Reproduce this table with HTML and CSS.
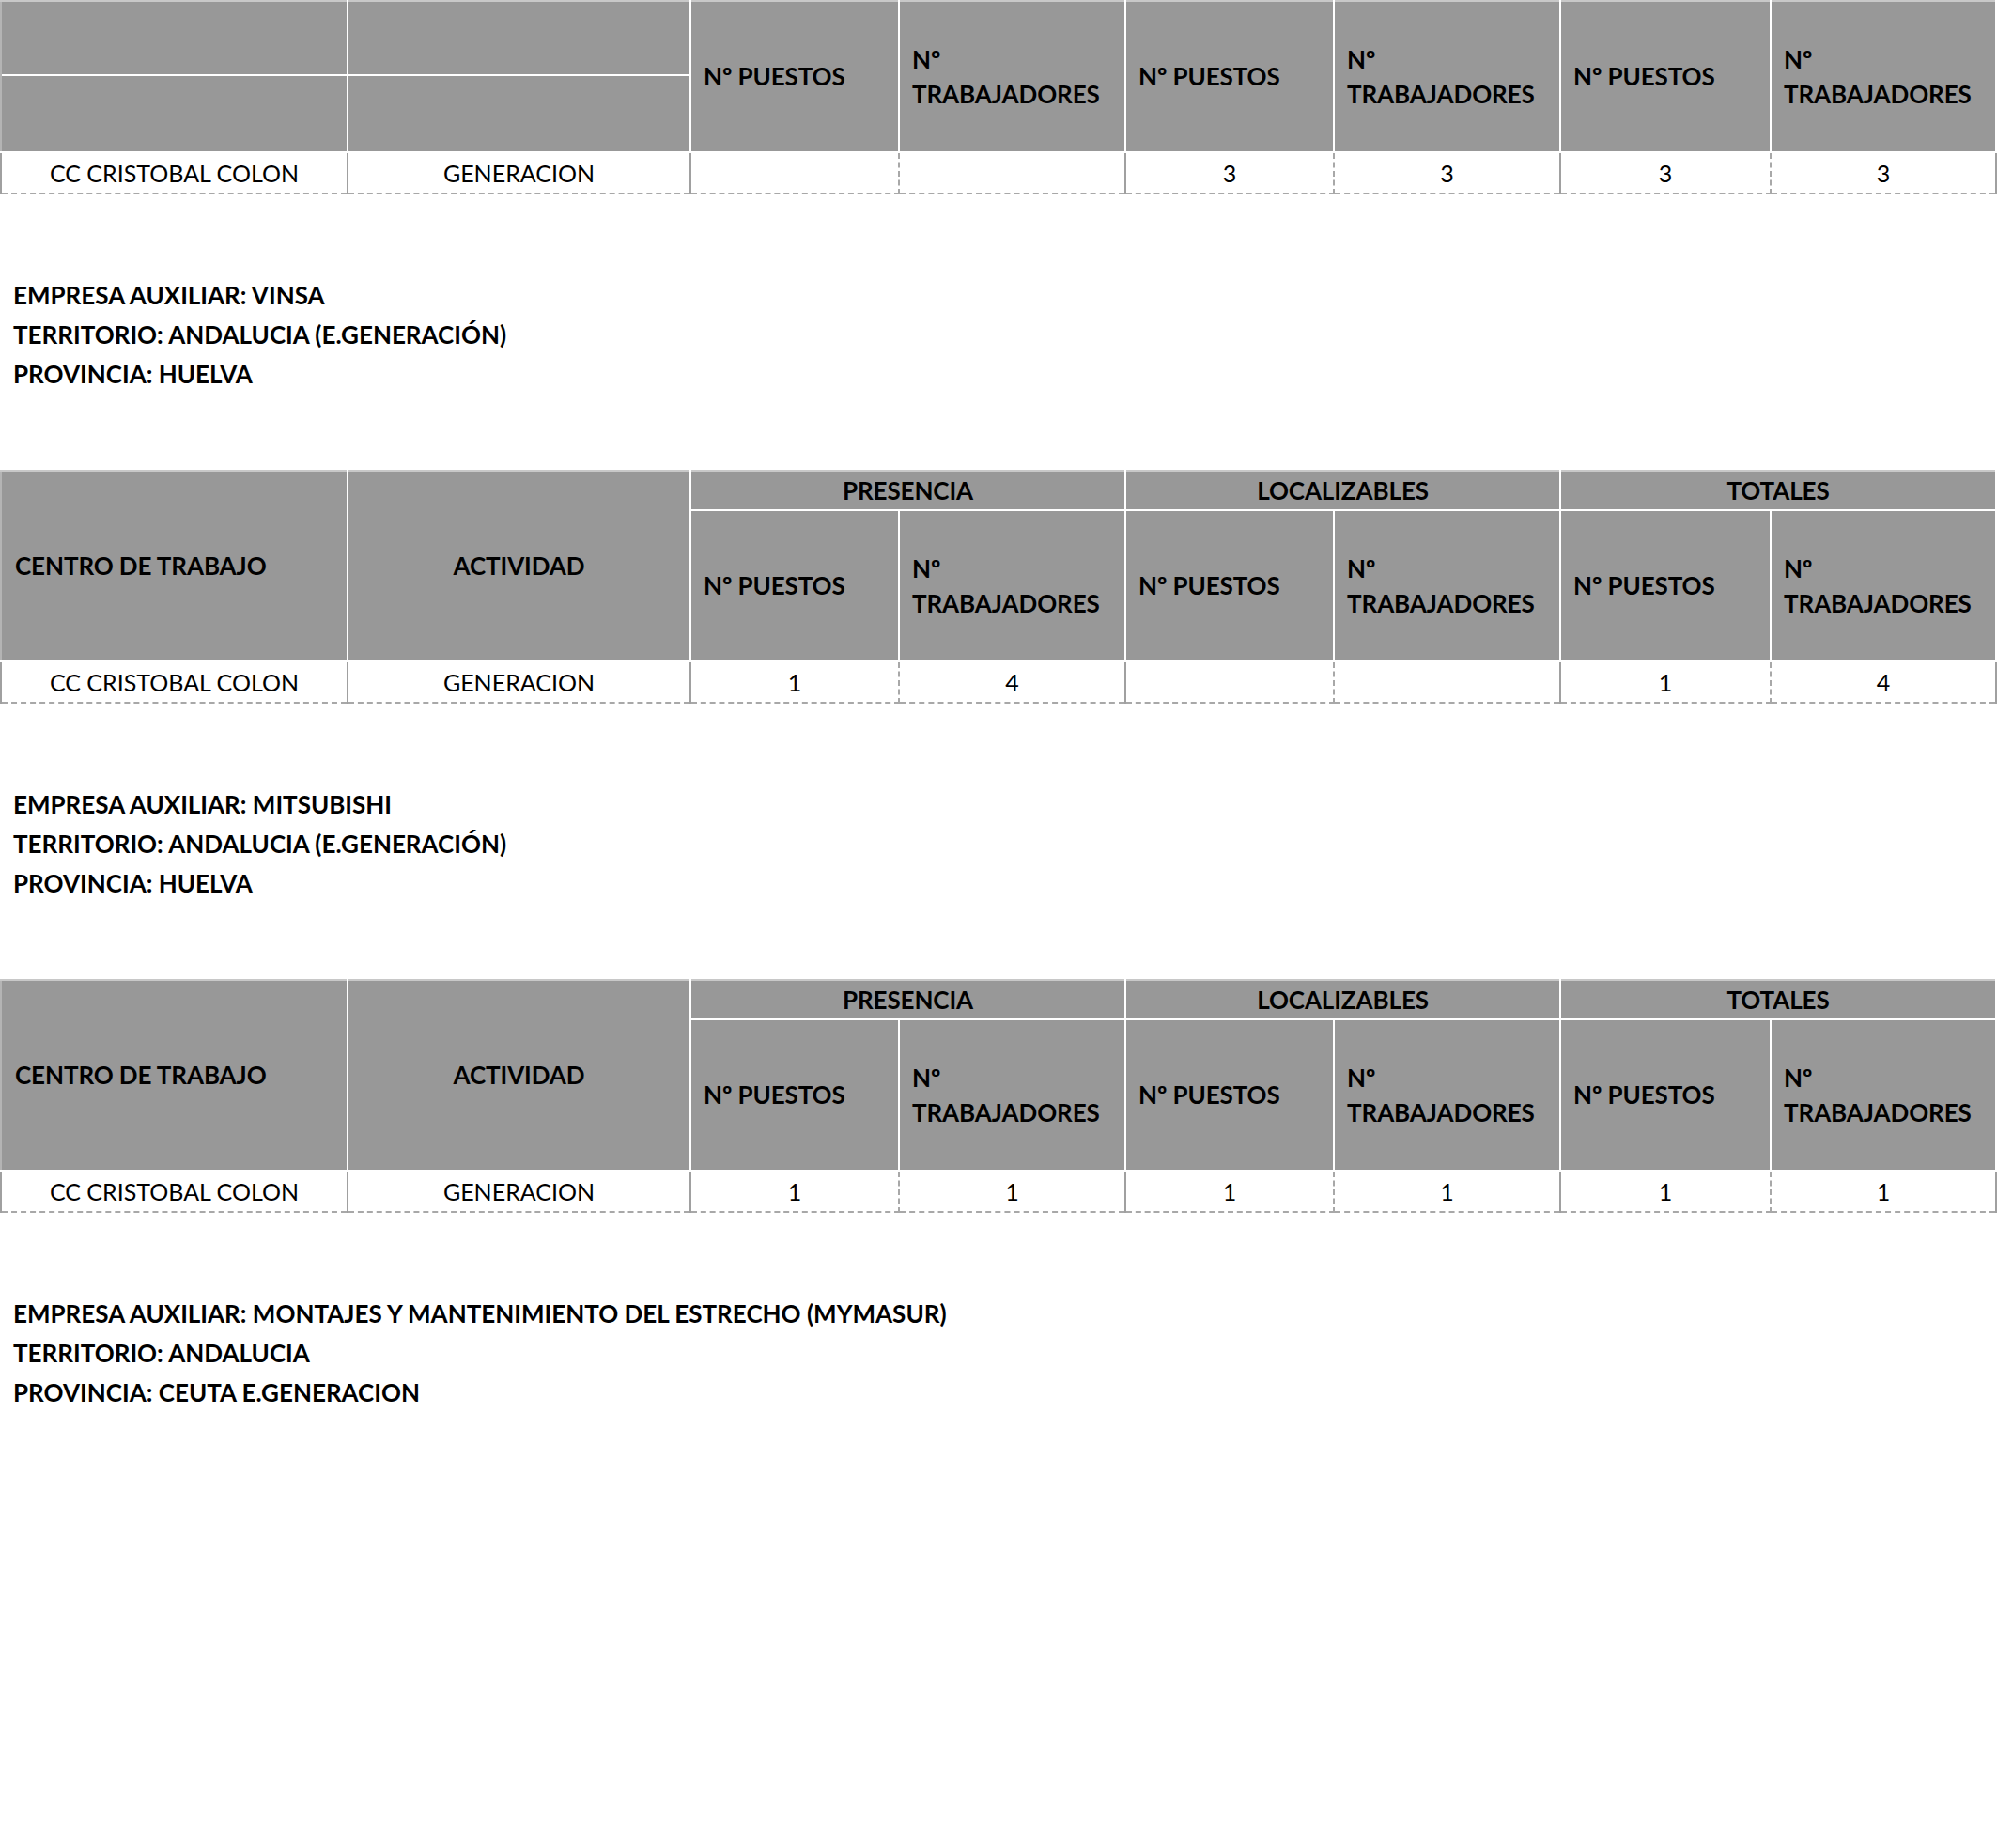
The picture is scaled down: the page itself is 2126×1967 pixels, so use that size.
FILE: index.html
```html
<!DOCTYPE html>
<html lang="es">
<head>
<meta charset="utf-8">
<title>Empresas auxiliares</title>
<link rel="stylesheet" href="styles.css">
</head>
<body>
<div class="page">

<table class="grid first">
  <colgroup>
    <col class="c1"><col class="c2"><col class="c3"><col class="c4"><col class="c5"><col class="c6"><col class="c7"><col class="c8">
  </colgroup>
  <thead>
    <tr class="h-split-a">
      <th class="blank split"></th>
      <th class="blank split"></th>
      <th rowspan="2" class="sub">Nº PUESTOS</th>
      <th rowspan="2" class="sub">Nº<br>TRABAJADORES</th>
      <th rowspan="2" class="sub">Nº PUESTOS</th>
      <th rowspan="2" class="sub">Nº<br>TRABAJADORES</th>
      <th rowspan="2" class="sub">Nº PUESTOS</th>
      <th rowspan="2" class="sub">Nº<br>TRABAJADORES</th>
    </tr>
    <tr class="h-split-b">
      <th class="blank"></th>
      <th class="blank"></th>
    </tr>
  </thead>
  <tbody>
    <tr class="data">
      <td class="solid">CC CRISTOBAL COLON</td>
      <td class="solid">GENERACION</td>
      <td class="dash"></td>
      <td class="solid"></td>
      <td class="dash">3</td>
      <td class="solid">3</td>
      <td class="dash">3</td>
      <td class="solid">3</td>
    </tr>
  </tbody>
</table>

<div class="info">
  <p>EMPRESA AUXILIAR: VINSA</p>
  <p>TERRITORIO: ANDALUCIA (E.GENERACIÓN)</p>
  <p>PROVINCIA: HUELVA</p>
</div>

<table class="grid">
  <colgroup>
    <col class="c1"><col class="c2"><col class="c3"><col class="c4"><col class="c5"><col class="c6"><col class="c7"><col class="c8">
  </colgroup>
  <thead>
    <tr class="h-group">
      <th rowspan="2" class="left">CENTRO DE TRABAJO</th>
      <th rowspan="2" class="center">ACTIVIDAD</th>
      <th colspan="2" class="center">PRESENCIA</th>
      <th colspan="2" class="center">LOCALIZABLES</th>
      <th colspan="2" class="center">TOTALES</th>
    </tr>
    <tr class="h-sub">
      <th class="sub">Nº PUESTOS</th>
      <th class="sub">Nº<br>TRABAJADORES</th>
      <th class="sub">Nº PUESTOS</th>
      <th class="sub">Nº<br>TRABAJADORES</th>
      <th class="sub">Nº PUESTOS</th>
      <th class="sub">Nº<br>TRABAJADORES</th>
    </tr>
  </thead>
  <tbody>
    <tr class="data">
      <td class="solid">CC CRISTOBAL COLON</td>
      <td class="solid">GENERACION</td>
      <td class="dash">1</td>
      <td class="solid">4</td>
      <td class="dash"></td>
      <td class="solid"></td>
      <td class="dash">1</td>
      <td class="solid">4</td>
    </tr>
  </tbody>
</table>

<div class="info">
  <p>EMPRESA AUXILIAR: MITSUBISHI</p>
  <p>TERRITORIO: ANDALUCIA (E.GENERACIÓN)</p>
  <p>PROVINCIA: HUELVA</p>
</div>

<table class="grid">
  <colgroup>
    <col class="c1"><col class="c2"><col class="c3"><col class="c4"><col class="c5"><col class="c6"><col class="c7"><col class="c8">
  </colgroup>
  <thead>
    <tr class="h-group">
      <th rowspan="2" class="left">CENTRO DE TRABAJO</th>
      <th rowspan="2" class="center">ACTIVIDAD</th>
      <th colspan="2" class="center">PRESENCIA</th>
      <th colspan="2" class="center">LOCALIZABLES</th>
      <th colspan="2" class="center">TOTALES</th>
    </tr>
    <tr class="h-sub">
      <th class="sub">Nº PUESTOS</th>
      <th class="sub">Nº<br>TRABAJADORES</th>
      <th class="sub">Nº PUESTOS</th>
      <th class="sub">Nº<br>TRABAJADORES</th>
      <th class="sub">Nº PUESTOS</th>
      <th class="sub">Nº<br>TRABAJADORES</th>
    </tr>
  </thead>
  <tbody>
    <tr class="data">
      <td class="solid">CC CRISTOBAL COLON</td>
      <td class="solid">GENERACION</td>
      <td class="dash">1</td>
      <td class="solid">1</td>
      <td class="dash">1</td>
      <td class="solid">1</td>
      <td class="dash">1</td>
      <td class="solid">1</td>
    </tr>
  </tbody>
</table>

<div class="info last">
  <p>EMPRESA AUXILIAR: MONTAJES Y MANTENIMIENTO DEL ESTRECHO (MYMASUR)</p>
  <p>TERRITORIO: ANDALUCIA</p>
  <p>PROVINCIA: CEUTA E.GENERACION</p>
</div>

</div>
</body>
</html>
```

FILE: styles.css
```css
html, body {
  margin: 0;
  padding: 0;
  background: #ffffff;
}

body {
  font-family: "Lato", "Open Sans", "Liberation Sans", sans-serif;
  color: #000000;
  font-size: 26px;
}

.page {
  width: 2126px;
  min-height: 1967px;
}

.grid {
  width: 2124px;
  table-layout: fixed;
  border-collapse: collapse;
  border-spacing: 0;
}

.c1 { width: 369px; }
.c2 { width: 365px; }
.c3 { width: 222px; }
.c4 { width: 241px; }
.c5 { width: 222px; }
.c6 { width: 241px; }
.c7 { width: 224px; }
.c8 { width: 240px; }

.grid th {
  background: #989898;
  border: 2px solid #ffffff;
  font-weight: 700;
  line-height: 37px;
  padding: 0 13px;
  vertical-align: middle;
  white-space: nowrap;
  letter-spacing: -0.1px;
}

.grid th.left { text-align: left; padding-left: 14px; }
.grid th.center { text-align: center; }
.grid th.sub { text-align: left; }

.grid thead tr:first-child th { border-top-color: #c8c8c8; }
.grid th:first-child { border-left-color: #b4b4b4; }

.h-split-a { height: 79px; }
.h-split-b { height: 82px; }
.grid th.split { border-bottom: 1px solid #b8b8b8; }
.first th.sub { border-top-color: #ffffff; }

.h-group { height: 42px; }
.h-sub { height: 161px; }

.data { height: 44px; }

.grid td {
  text-align: center;
  padding: 0 6px;
  font-size: 25px;
  line-height: 40px;
  font-weight: 400;
  white-space: nowrap;
  border-bottom: 2px dashed #a8a8a8;
  border-top: 2px solid #d0d0d0;
}

.grid td.solid { border-right: 2px solid #a0a0a0; }
.grid td.dash { border-right: 2px dashed #a8a8a8; }
.grid td:first-child { border-left: 2px solid #a0a0a0; }

.info {
  padding: 86px 0 81px 14px;
}

.info p {
  margin: 0;
  font-weight: 700;
  line-height: 42px;
}

.info.last {
  padding-bottom: 0;
}
```
